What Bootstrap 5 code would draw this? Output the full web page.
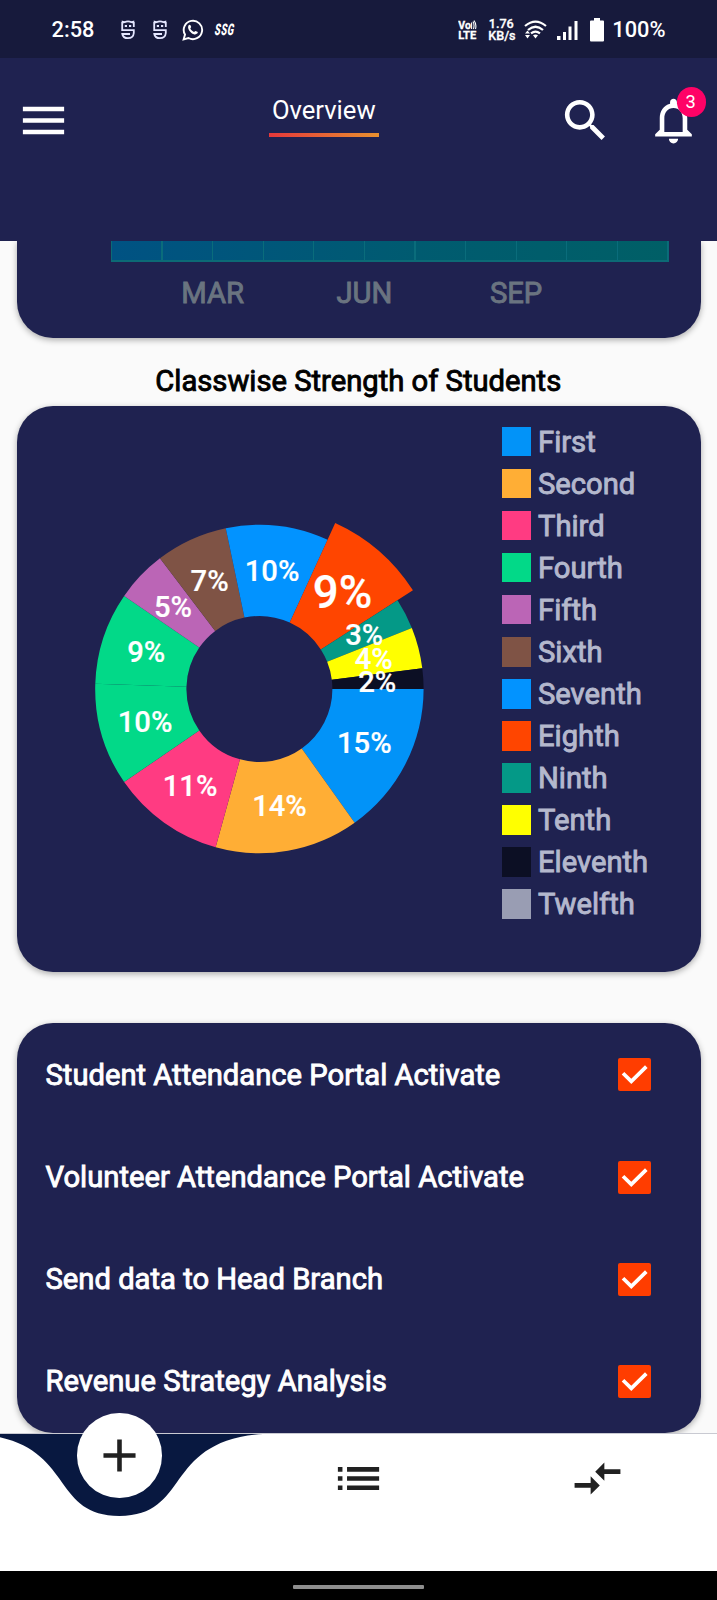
<!DOCTYPE html>
<html lang="en">
<head>
<meta charset="utf-8">
<meta name="viewport" content="width=device-width, initial-scale=1">
<title>Overview</title>
<link href="https://cdn.jsdelivr.net/npm/bootstrap@5.3.0/dist/css/bootstrap.min.css" rel="stylesheet">
<style>
  :root { --navy: #1f2250; --notch: #081840; }
  body { font-family: Roboto, "Liberation Sans", sans-serif; height: 1600px; overflow: hidden; background: #fafafa; }
  .status { height: 58px; background: #171a3c; color: #fff; padding: 2px 51.5px 0 51.5px; font-weight: 500; font-size: 21.8px; line-height: 1; }
  .status svg, .appbar svg, .bottom svg { display: block; flex: none; }
  .tiny { font-size: 12.6px; line-height: 12px; text-align: center; }
  .ssg { font-size: 16px; font-weight: 900; display: inline-block; transform: scaleX(.58) skewX(-18deg); transform-origin: 0 50%; margin-left: 11px; width: 22px; letter-spacing: 1px; }
  .appbar { height: 183px; background: var(--navy); color: #fff; padding: 35px 16px 0; }
  .side-left { width: 253px; }
  .tab { font-size: 25.6px; line-height: 30px; margin-top: 1.5px; width: 109.5px; }
  .tab::after { content: ""; display: block; height: 4px; margin-top: 8.5px; background: linear-gradient(90deg, #e5383b, #e8912f); }
  .bell { position: relative; }
  .count { position: absolute; left: 30.5px; top: -5.7px; width: 29.5px; height: 29.5px; border-radius: 50%; background: #ff0266; font-size: 18.3px; line-height: 29px; padding-right: 1px; }
  main { height: 1191.5px; overflow: hidden; padding: 0 16.5px; }
  .panel { background: var(--navy); border-radius: 36px; box-shadow: 0 2px 6px rgba(0,0,0,.32); }
  .heavy { font-size: 29.2px; line-height: 34px; -webkit-text-stroke: .9px currentColor; white-space: nowrap; }
  .trend { height: 97px; border-radius: 0 0 36px 36px; padding: 0 32px 0 94.4px; }
  .strip { height: 21px; border: solid #0c6a75; border-width: 0 1px 2px; background:
    repeating-linear-gradient(90deg, transparent 0 49.4px, #0a6c7b 49.4px 50.6px), linear-gradient(90deg, #005283, #005b70 55%, #005f66); }
  .months { color: #6a7480; margin: 14px 0 0 26px; }
  .months span { width: 151.7px; text-align: center; }
  .heading { color: #000; margin: 26px 0 8px; text-align: center; padding-right: .5px; }
  .classes { height: 566px; }
  .donut { width: 460px; height: 566px; }
  .donut text { font-weight: 500; fill: #fff; stroke: #fff; stroke-width: .2px; text-anchor: middle; -webkit-text-stroke: 0; }
  .legend { color: #b4b8cd; padding: 14.5px 0 0 25px; }
  .legend li { height: 42.05px; gap: 7px; }
  .swatch { width: 29.5px; height: 29.5px; }
  .options { margin-top: 51px; height: 409.5px; color: #fff; padding: .5px 49.5px 0 29px; }
  .options label { height: 102.2px; }
  .form-check-input.tick { width: 33px; height: 33px; margin: .5px 0 0; border: 0; border-radius: 2px; box-shadow: none; background-color: #ff3d00;
    background-size: 100% 100%;
    background-image: url("data:image/svg+xml,%3Csvg xmlns='http://www.w3.org/2000/svg' viewBox='0 0 33 33'%3E%3Cpath d='M5 15.2 13.3 23.3 28.3 8.6' fill='none' stroke='%23fff' stroke-width='3.7'/%3E%3C/svg%3E"); }
  .bottom { height: 138px; background: #fff; border-top: 1px solid #c9cad2; position: relative; }
  .notch { position: absolute; left: 0; top: 0; }
  .fab { position: absolute; left: 77.3px; top: -20.1px; width: 84.4px; height: 84.4px; border-radius: 50%; background: #fff; }
  .bottom .slot { width: 239px; padding-top: 17.9px; }
  .gesture { height: 29.5px; background: #000; }
  .gesture i { width: 131px; height: 4px; border-radius: 1px; background: #8e8e8e; margin-top: 14.5px; }
</style>
</head>
<body class="d-flex flex-column">

<header>
  <div class="status d-flex align-items-center justify-content-between">
    <div class="d-flex align-items-center">
      <span style="width:69px">2:58</span>
      <svg width="32" height="20" viewBox="0 0 32 20"><use href="#mask"/></svg>
      <svg width="29" height="20" viewBox="0 0 29 20"><use href="#mask"/></svg>
      <svg width="22" height="22" viewBox="0 0 22 22" fill="none" stroke="#fff" stroke-width="1.9"><path d="M1.6 20.4 3 15.6A9.2 9.2 0 1 1 6.5 19z"/><path d="M6.6 6.3c.8-1 1.7-.7 2 .2l.6 1.6-.9 1.3c.9 1.7 2 2.7 3.7 3.5l1.4-1 2 .9c.6.4.5 1.1-.2 1.8-1.5 1.4-3.7.9-5.8-.7C7 12 5.2 9 6.6 6.3z" fill="#fff" stroke="none"/></svg>
      <span class="ssg">SSG</span>
    </div>
    <div class="d-flex align-items-center">
      <svg width="19" height="20" viewBox="0 0 19 20" fill="#fff" stroke="#fff"><g stroke-width=".3" font-family="Roboto" font-weight="700"><text x="0.3" y="9" font-size="10" textLength="12.5" lengthAdjust="spacingAndGlyphs">Vo</text><text x="0.3" y="19" font-size="11.5" textLength="18" lengthAdjust="spacingAndGlyphs">LTE</text></g><path d="M13.6 2.5v6.5M15 1.5q1.8 3 .5 7.5M16 .5q2.8 3.5 1.5 8.5" fill="none" stroke-width="1.1"/></svg>
      <div class="tiny" style="margin:0 10px 0 11px;width:26px;-webkit-text-stroke:.3px #fff">1.76<br>KB/s</div>
      <svg width="23" height="20" viewBox="0 0 23 20" fill="none" stroke="#fff" stroke-width="2.2"><path d="M1 6Q11.5-2.8 22 6M4 10Q11.5 3.5 19 10M7 13.4Q11.5 9.8 16 13.4"/><path d="M11.5 18.5 9 15.2Q11.5 13.6 14 15.2zM3.5 10.5 6 13.5H1zM3.5 18.5 6 15H1z" fill="#fff" stroke="none"/></svg>
      <svg style="margin-left:10px" width="21" height="19" viewBox="0 0 21 19" fill="#fff"><path d="M0 15h3.5v4H0zM6 11h3v8H6zM11.5 5.5h3V19h-3zM17.5 0h3v19h-3z"/></svg>
      <svg style="margin:0 8px 0 12px" width="14" height="24" viewBox="0 0 14 24" fill="#fff"><path d="M4 0h6v2.5h3q1 0 1 1V22.5q0 1-1 1H1q-1 0-1-1V3.500q0-1 1-1h3z"/></svg>
      <span>100%</span>
    </div>
  </div>
  <nav class="appbar d-flex align-items-start">
    <div class="side-left">
      <svg width="55" height="55" viewBox="0 0 24 24" fill="#fff"><path d="M3 18h18v-2H3v2zm0-5h18v-2H3v2zm0-7v2h18V6H3z"/></svg>
    </div>
    <div class="tab text-center text-nowrap">Overview</div>
    <div class="d-flex ms-auto">
      <svg style="margin-right:33px" width="55" height="55" viewBox="0 0 24 24" fill="#fff"><path d="M15.5 14h-.79l-.28-.27C15.41 12.59 16 11.11 16 9.5 16 5.91 13.09 3 9.5 3S3 5.91 3 9.5 5.91 16 9.5 16c1.61 0 3.09-.59 4.23-1.57l.27.28v.79l5 4.99L20.49 19l-4.99-5zm-6 0C7.01 14 5 11.99 5 9.5S7.01 5 9.5 5 14 7.01 14 9.5 11.99 14 9.5 14z"/></svg>
      <div class="bell">
        <svg width="55" height="55" viewBox="0 0 24 24" fill="#fff"><path d="M12 22c1.1 0 2-.9 2-2h-4c0 1.1.9 2 2 2zm6-6v-5c0-3.07-1.63-5.64-4.5-6.32V4c0-.83-.67-1.5-1.5-1.5s-1.5.67-1.5 1.5v.68C7.64 5.36 6 7.92 6 11v5l-2 2v1h16v-1l-2-2zm-2 1H8v-6c0-2.48 1.51-4.5 4-4.5s4 2.02 4 4.5v6z"/></svg>
        <span class="count text-center">3</span>
      </div>
    </div>
  </nav>
</header>

<main>
  <section class="panel trend">
    <div class="strip"></div>
    <div class="months heavy d-flex"><span>MAR</span><span>JUN</span><span>SEP</span></div>
  </section>

  <h1 class="heading heavy fw-normal">Classwise Strength of Students</h1>

  <section class="panel classes d-flex">
    <svg class="donut" viewBox="0 0 460 566" id="donut"></svg>
    <ul class="legend heavy list-unstyled mb-0" id="legend"></ul>
  </section>

  <section class="panel options heavy">
    <label class="d-flex align-items-center justify-content-between">Student Attendance Portal Activate<input class="form-check-input tick" type="checkbox" checked></label>
    <label class="d-flex align-items-center justify-content-between">Volunteer Attendance Portal Activate<input class="form-check-input tick" type="checkbox" checked></label>
    <label class="d-flex align-items-center justify-content-between">Send data to Head Branch<input class="form-check-input tick" type="checkbox" checked></label>
    <label class="d-flex align-items-center justify-content-between">Revenue Strategy Analysis<input class="form-check-input tick" type="checkbox" checked></label>
  </section>
</main>

<nav class="bottom d-flex">
  <svg class="notch" width="270" height="84" viewBox="0 0 270 84"><path d="M-23.9 0C76.5 6.85 47.8 82 119.5 82S162.5 6.85 262.9 0z" fill="#081840"/></svg>
  <div class="slot"><div class="fab d-flex align-items-center justify-content-center"><svg width="55" height="55" viewBox="0 0 24 24" fill="#212121"><path d="M19 13h-6v6h-2v-6H5v-2h6V5h2v6h6v2z"/></svg></div></div>
  <div class="slot d-flex justify-content-center"><svg width="55" height="55" viewBox="0 0 24 24" fill="#212121"><path d="M3 13h2v-2H3v2zm0 4h2v-2H3v2zm0-8h2V7H3v2zm4 4h14v-2H7v2zm0 4h14v-2H7v2zM7 7v2h14V7H7z"/></svg></div>
  <div class="slot d-flex justify-content-center"><svg width="55" height="55" viewBox="0 0 24 24" fill="#212121"><path d="M9.01 14H2v2h7.01v3L13 15l-3.99-4v3zm5.98-1v-3H22V8h-7.01V5L11 9l3.99 4z"/></svg></div>
</nav>
<div class="gesture d-flex justify-content-center"><i></i></div>

<svg width="0" height="0" style="position:absolute">
  <defs>
    <g id="mask" fill="none" stroke="#e4e6ff" stroke-width="1.8">
      <path d="M13 10.2H1.2V2.5L3.5 2.2Q7 .5 10.5 2.2L12.8 2.5V7M1 10.2H12.8V13Q12.3 18.2 7 18.2 2 18.2 1.3 14H9"/>
      <path d="M.7.5 4 1.5 1.5 4zM13.3.5 10 1.5 12.5 4z" fill="#e4e6ff" stroke="none"/>
      <path d="M3.8 6h2.2M8 6h2.2" stroke-width="2"/>
    </g>
  </defs>
</svg>

<script src="https://cdn.jsdelivr.net/npm/bootstrap@5.3.0/dist/js/bootstrap.bundle.min.js"></script>
<script>
  const classes = [
    ['First', 15, '#0293f8'], ['Second', 14, '#ffae35'], ['Third', 11, '#ff3b82'], ['Fourth', 10, '#02d988'],
    ['', 9, '#02d988'], ['Fifth', 5, '#bb65b6'], ['Sixth', 7, '#7f5345'], ['Seventh', 10, '#0293ff'],
    ['Eighth', 9, '#ff4500'], ['Ninth', 3, '#049987'], ['Tenth', 4, '#ffff00'], ['Eleventh', 2, '#0c0f24'], ['Twelfth', 0, '#999db3']
  ];
  const total = classes.reduce((sum, c) => sum + c[1], 0);
  const cx = 242.4, cy = 283, inner = 73;
  let angle = 0, slices = '', labels = '', legend = '';
  const at = (r, a) => (cx + r * Math.cos(a)).toFixed(2) + ' ' + (cy + r * Math.sin(a)).toFixed(2);
  for (const [name, value, color] of classes) {
    const big = name === 'Eighth', outer = big ? 182.5 : 164.2;
    const end = angle + value / total * 2 * Math.PI;
    if (value) {
      slices += `<path fill="${color}" d="M${at(inner, angle)}L${at(outer, angle)}A${outer} ${outer} 0 0 1 ${at(outer, end)}L${at(inner, end)}A${inner} ${inner} 0 0 0 ${at(inner, angle)}z"/>`;
      const mid = (angle + end) / 2, r = (inner + outer) / 2, size = big ? 45.6 : 29.2;
      labels += `<text x="${cx - .5 + r * Math.cos(mid)}" y="${cy + r * Math.sin(mid) + size * .345}" font-size="${size}">${value}%</text>`;
    }
    if (name) legend += `<li class="d-flex align-items-center"><span class="swatch" style="background:${color}"></span>${name}</li>`;
    angle = end;
  }
  document.getElementById('donut').innerHTML = slices + labels;
  document.getElementById('legend').innerHTML = legend;
</script>
</body>
</html>
